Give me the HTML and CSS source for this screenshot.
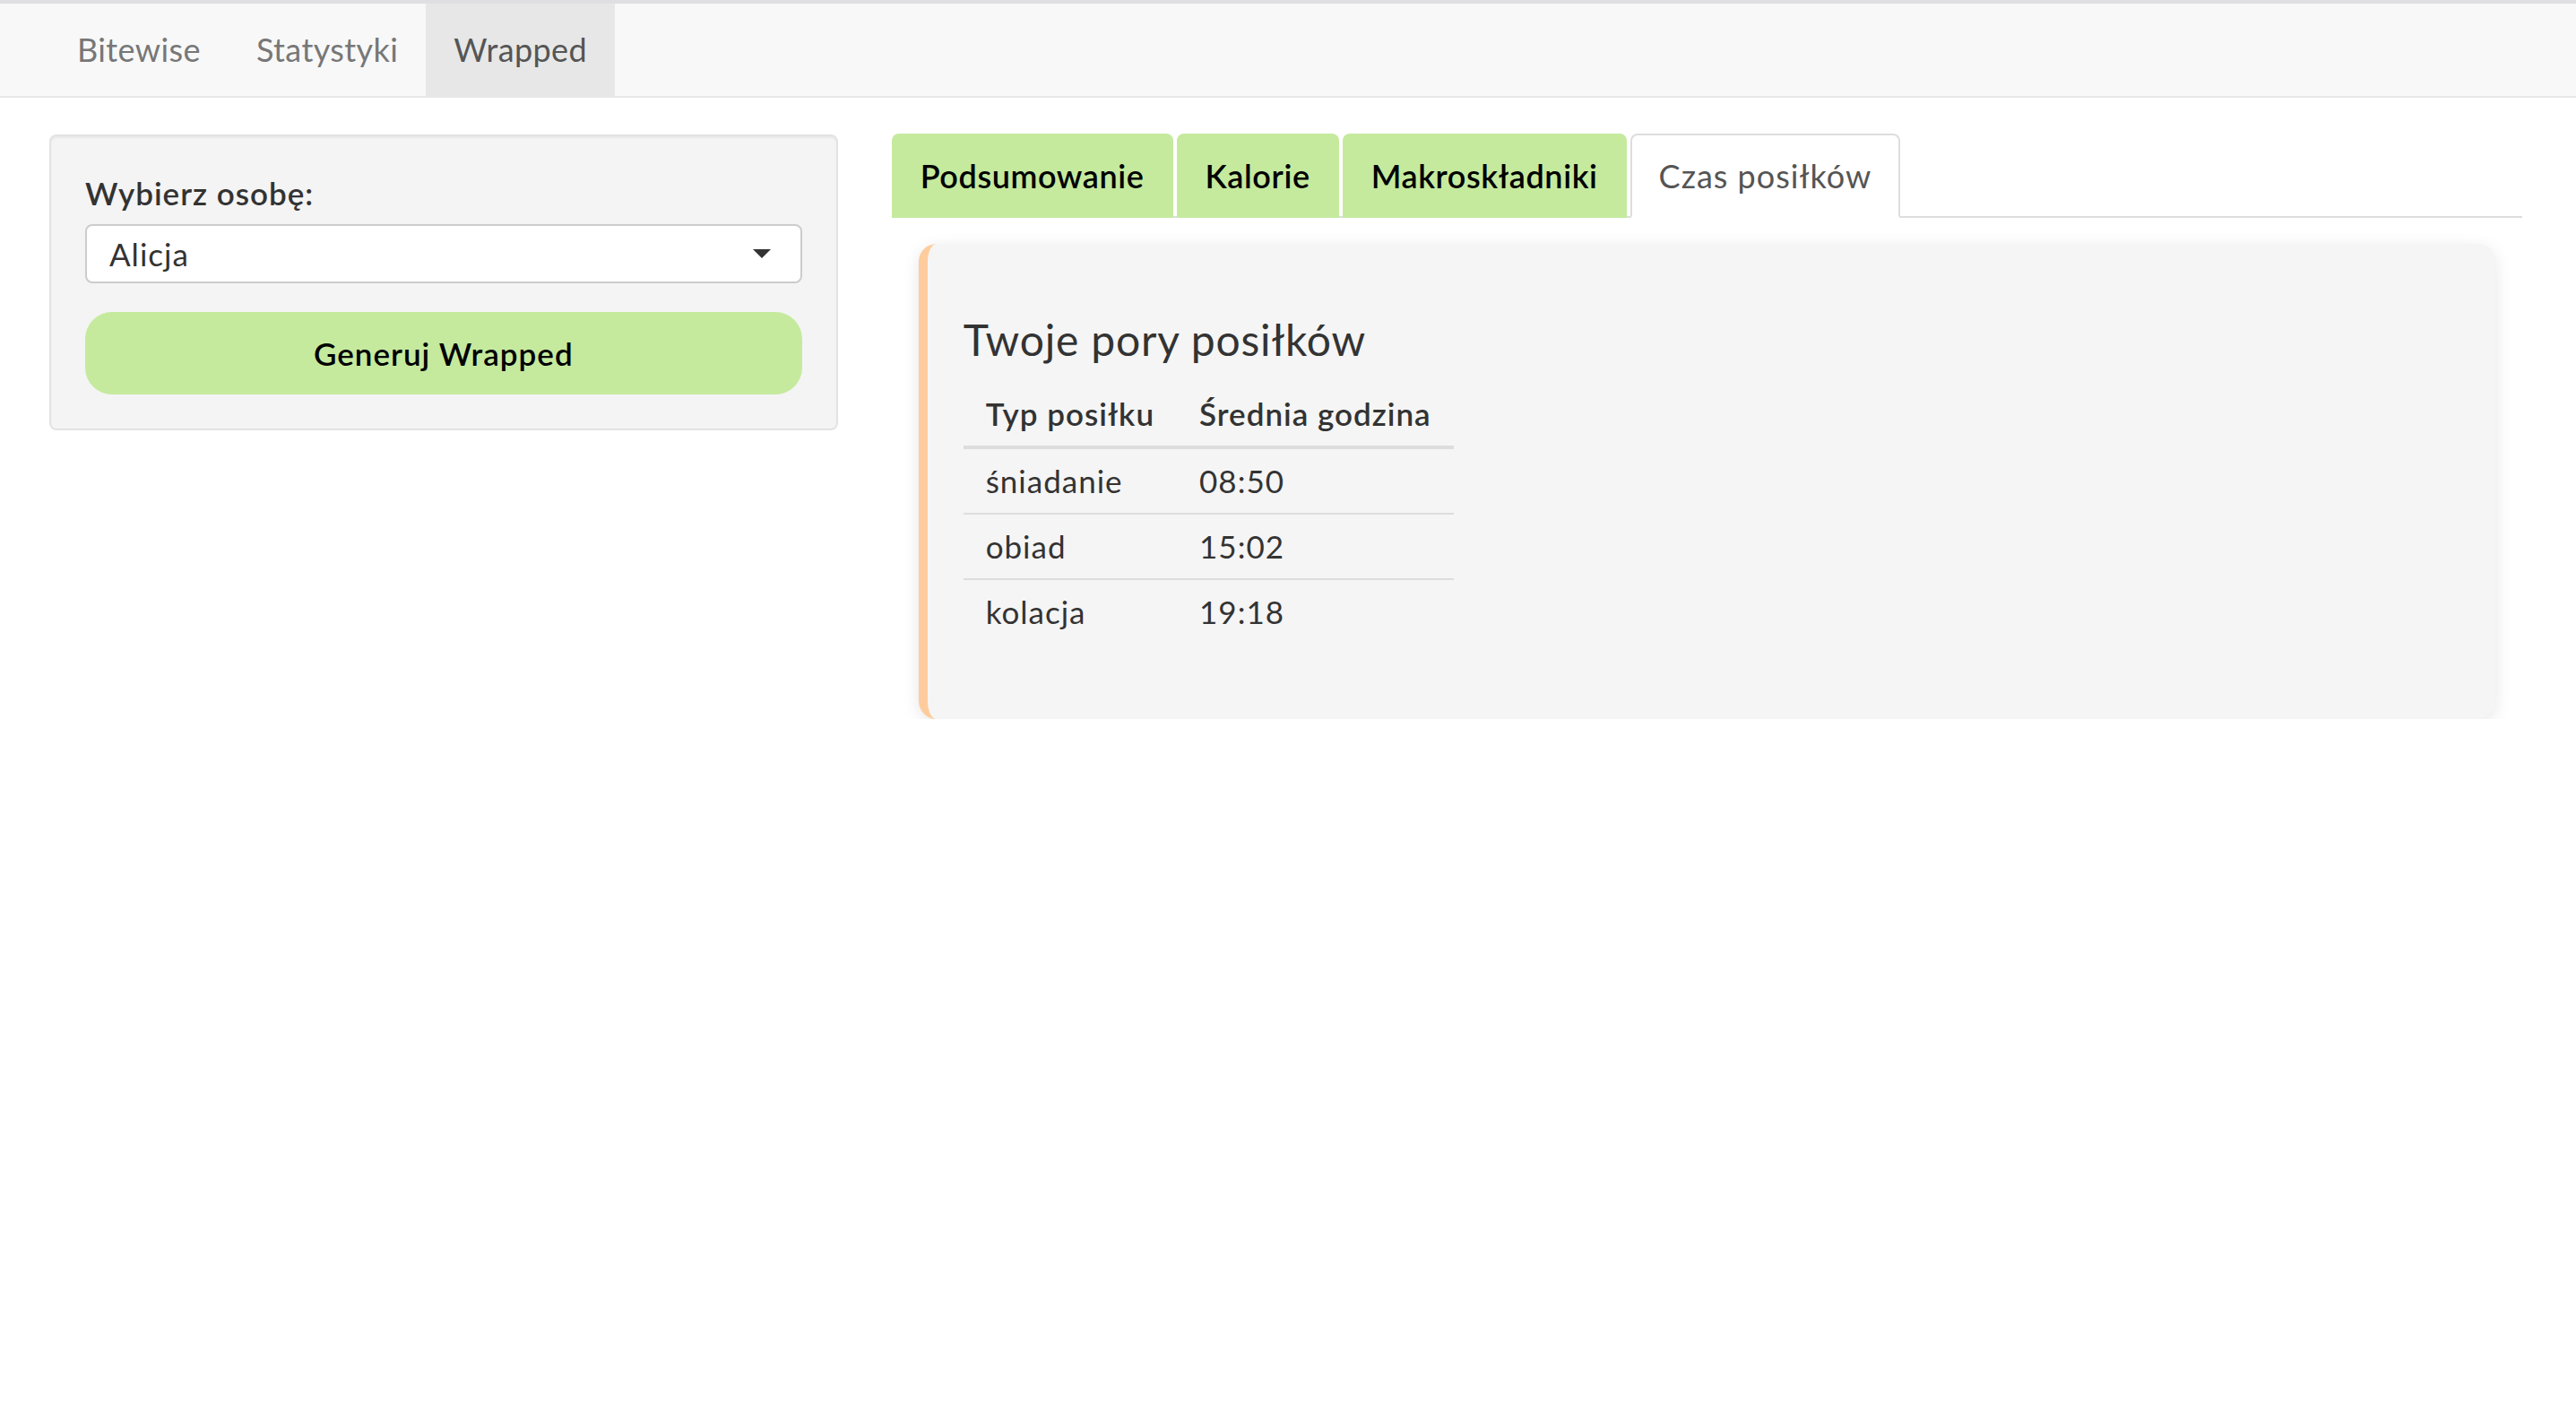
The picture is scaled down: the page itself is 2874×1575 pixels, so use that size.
FILE: index.html
```html
<!DOCTYPE html>
<html lang="pl">
<head>
<meta charset="utf-8">
<title>Bitewise – Wrapped</title>
<link rel="stylesheet" href="styles.css">
</head>
<body>
<nav class="navbar">
  <ul class="nav-links">
    <li><a class="nav-link">Bitewise</a></li>
    <li><a class="nav-link">Statystyki</a></li>
    <li><a class="nav-link active">Wrapped</a></li>
  </ul>
</nav>
<div class="page">
  <div class="row">
    <aside class="col-side">
      <div class="well">
        <div class="form-group">
          <label class="control-label">Wybierz osobę:</label>
          <div class="select-box">
            <span class="select-value">Alicja</span>
            <span class="caret"></span>
          </div>
        </div>
        <button class="btn-generate">Generuj Wrapped</button>
      </div>
    </aside>
    <main class="col-main">
      <ul class="tabs">
        <li class="tab">Podsumowanie</li>
        <li class="tab">Kalorie</li>
        <li class="tab">Makroskładniki</li>
        <li class="tab tab-active">Czas posiłków</li>
      </ul>
      <section class="card">
        <h3 class="card-title">Twoje pory posiłków</h3>
        <table class="meal-table">
          <thead>
            <tr><th>Typ posiłku</th><th>Średnia godzina</th></tr>
          </thead>
          <tbody>
            <tr><td>śniadanie</td><td>08:50</td></tr>
            <tr><td>obiad</td><td>15:02</td></tr>
            <tr><td>kolacja</td><td>19:18</td></tr>
          </tbody>
        </table>
      </section>
    </main>
  </div>
</div>
</body>
</html>
```
FILE: styles.css
```css
* { box-sizing: border-box; }

html, body {
  margin: 0;
  padding: 0;
  background: #ffffff;
  font-family: "Lato", "Noto Sans", "Liberation Sans", sans-serif;
  color: #333333;
  letter-spacing: 1px;
}

/* Navbar */
.navbar {
  border-top: 4px solid #dedee3;
  background: #f8f8f8;
  border-bottom: 2px solid #e7e7e7;
  height: 109px;
  margin-bottom: 40px;
}
.nav-links {
  list-style: none;
  margin: 0;
  padding: 0 0 0 55px;
  display: flex;
  height: 103px;
}
.nav-link {
  display: block;
  padding: 0 31px;
  line-height: 103px;
  font-size: 36px;
  letter-spacing: 0.4px;
  color: #777777;
}
.nav-link.active {
  background: #e7e7e7;
  color: #555555;
}

/* Layout */
.page {
  padding: 0 30px 0 25px;
}
.row {
  display: grid;
  grid-template-columns: 1fr 2fr;
}
.col-side, .col-main {
  padding: 0 30px;
  min-width: 0;
}

/* Sidebar well */
.well {
  margin-top: 1px;
  background: #f4f4f4;
  border: 2px solid #e3e3e3;
  border-radius: 8px;
  box-shadow: inset 0 2px 2px rgba(0, 0, 0, 0.05);
  padding: 38px;
}
.form-group {
  margin-bottom: 32px;
}
.control-label {
  display: block;
  font-size: 35px;
  font-weight: 600;
  line-height: 50px;
  margin-bottom: 10px;
  color: #333333;
}
.select-box {
  display: flex;
  align-items: center;
  justify-content: space-between;
  height: 66px;
  background: #ffffff;
  border: 2px solid #cccccc;
  border-radius: 8px;
  padding: 0 33px 0 25px;
}
.select-value {
  font-size: 35px;
  color: #333333;
  line-height: 50px;
}
.caret {
  width: 0;
  height: 0;
  border-top: 10px solid #333333;
  border-left: 10px solid transparent;
  border-right: 10px solid transparent;
}
.btn-generate {
  display: block;
  width: 100%;
  height: 92px;
  border: none;
  border-radius: 30px;
  background: #c5ea9e;
  font-family: inherit;
  font-size: 35px;
  font-weight: 600;
  letter-spacing: 1px;
  color: #000000;
}

/* Tabs */
.tabs {
  list-style: none;
  margin: 0;
  padding: 0;
  display: flex;
  gap: 4px;
  border-bottom: 2px solid #dddddd;
}
.tab {
  margin-bottom: -2px;
  padding: 20px 30px;
  border: 2px solid #c5ea9e;
  border-bottom-color: transparent;
  border-radius: 8px 8px 0 0;
  background: #c5ea9e;
  font-size: 36px;
  font-weight: 600;
  letter-spacing: 0.6px;
  line-height: 50px;
  color: #000000;
}
.tab-active {
  background: #ffffff;
  border-color: #dddddd;
  border-bottom-color: #ffffff;
  font-weight: 400;
  letter-spacing: 1px;
  color: #555555;
}

/* Card */
.card {
  margin: 29px 30px 0 30px;
  background: #f5f5f5;
  border-left: 10px solid #fecc9c;
  border-radius: 20px;
  box-shadow: 0 4px 18px rgba(0, 0, 0, 0.1);
  padding: 41px 40px 44px 40px;
}
.card-title {
  margin: 40px 0 20px 0;
  font-size: 48px;
  font-weight: 400;
  line-height: 1.1;
  letter-spacing: 0.8px;
  color: #333333;
}
.meal-table {
  border-collapse: collapse;
  margin-bottom: 40px;
  font-size: 35px;
}
.meal-table th,
.meal-table td {
  text-align: left;
  padding: 10.5px 25px;
  line-height: 50px;
  color: #333333;
}
.meal-table th {
  font-weight: 600;
  border-bottom: 4px solid #dddddd;
}
.meal-table tbody tr + tr td {
  border-top: 2px solid #dddddd;
}
```
